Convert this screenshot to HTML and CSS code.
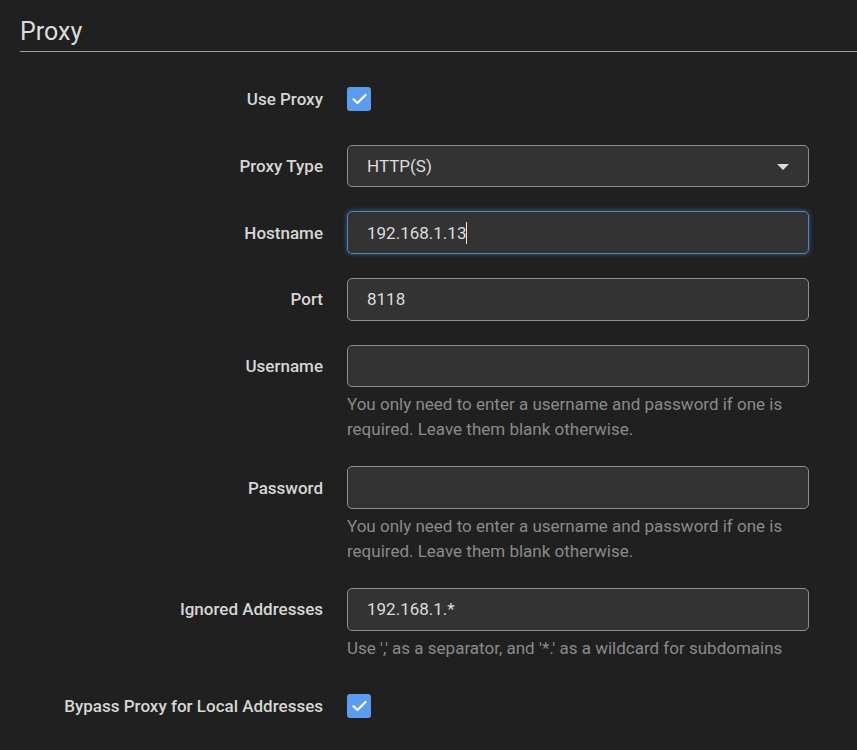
FILE: index.html
```html
<!DOCTYPE html>
<html>
<head>
<meta charset="utf-8">
<link rel="stylesheet" href="styles.css">
</head>
<body>
<div class="page">
  <h2 class="section-title">Proxy</h2>
  <div class="form">
    <div class="label">Use Proxy</div>
    <div class="field"><span class="checkbox"><svg width="15" height="12" viewBox="0 0 15 12"><path d="M1.5 6.2 L5.5 10 L13.5 2" fill="none" stroke="#fff" stroke-width="2.2" stroke-linecap="round" stroke-linejoin="round"/></svg></span></div>

    <div class="label">Proxy Type</div>
    <div class="field"><div class="input select">HTTP(S)<span class="caret-down"></span></div></div>

    <div class="label">Hostname</div>
    <div class="field"><div class="input focused">192.168.1.13<span class="text-caret"></span></div></div>

    <div class="label">Port</div>
    <div class="field"><div class="input">8118</div></div>

    <div class="label">Username</div>
    <div class="field with-help"><div class="input"></div><p class="help">You only need to enter a username and password if one is required. Leave them blank otherwise.</p></div>

    <div class="label">Password</div>
    <div class="field with-help"><div class="input"></div><p class="help">You only need to enter a username and password if one is required. Leave them blank otherwise.</p></div>

    <div class="label">Ignored Addresses</div>
    <div class="field with-help"><div class="input">192.168.1.*</div><p class="help">Use ',' as a separator, and '*.' as a wildcard for subdomains</p></div>

    <div class="label">Bypass Proxy for Local Addresses</div>
    <div class="field"><span class="checkbox"><svg width="15" height="12" viewBox="0 0 15 12"><path d="M1.5 6.2 L5.5 10 L13.5 2" fill="none" stroke="#fff" stroke-width="2.2" stroke-linecap="round" stroke-linejoin="round"/></svg></span></div>
  </div>
</div>
</body>
</html>
```

FILE: styles.css
```css
html, body {
  margin: 0;
  padding: 0;
  background: #202020;
  font-family: Roboto, "Liberation Sans", sans-serif;
  color: #dcdcdc;
}
.page {
  padding-left: 20px;
}
.section-title {
  margin: 0;
  padding-top: 16px;
  padding-bottom: 3px;
  font-size: 25px;
  line-height: 32px;
  font-weight: 400;
  color: #dcdcdc;
  border-bottom: 1px solid #a0a0a0;
}
.form {
  margin-top: 26px;
  display: grid;
  grid-template-columns: 303px 462px;
  column-gap: 24px;
  row-gap: 24px;
  align-items: start;
}
.label {
  height: 42.67px;
  display: flex;
  align-items: center;
  justify-content: flex-end;
  font-size: 17px;
  font-weight: 500;
  color: #d6d6d6;
  white-space: nowrap;
}
.field {
  min-height: 42.67px;
  display: flex;
  flex-direction: column;
  justify-content: center;
}
.field.with-help {
  justify-content: flex-start;
}
.checkbox {
  width: 24px;
  height: 24px;
  border-radius: 3px;
  background: #5b9cf0;
  display: flex;
  align-items: center;
  justify-content: center;
}
.input {
  box-sizing: border-box;
  height: 42.67px;
  width: 462px;
  background: #333333;
  border: 1px solid #8f8f8f;
  border-radius: 5px;
  padding: 0 19px;
  display: flex;
  align-items: center;
  font-size: 17px;
  color: #dcdcdc;
  position: relative;
}
.input.focused {
  border-color: #4f86c2;
  box-shadow: 0 0 5px rgba(80, 150, 230, 0.55);
}
.text-caret {
  display: inline-block;
  width: 1px;
  height: 22px;
  background: #e8e8e8;
}
.caret-down {
  position: absolute;
  right: 19px;
  top: 18px;
  width: 0;
  height: 0;
  border-left: 6px solid transparent;
  border-right: 6px solid transparent;
  border-top: 6px solid #dcdcdc;
}
.help {
  margin: 5px 0 0 0;
  font-size: 17px;
  line-height: 25px;
  color: #8a8a8a;
}
```
